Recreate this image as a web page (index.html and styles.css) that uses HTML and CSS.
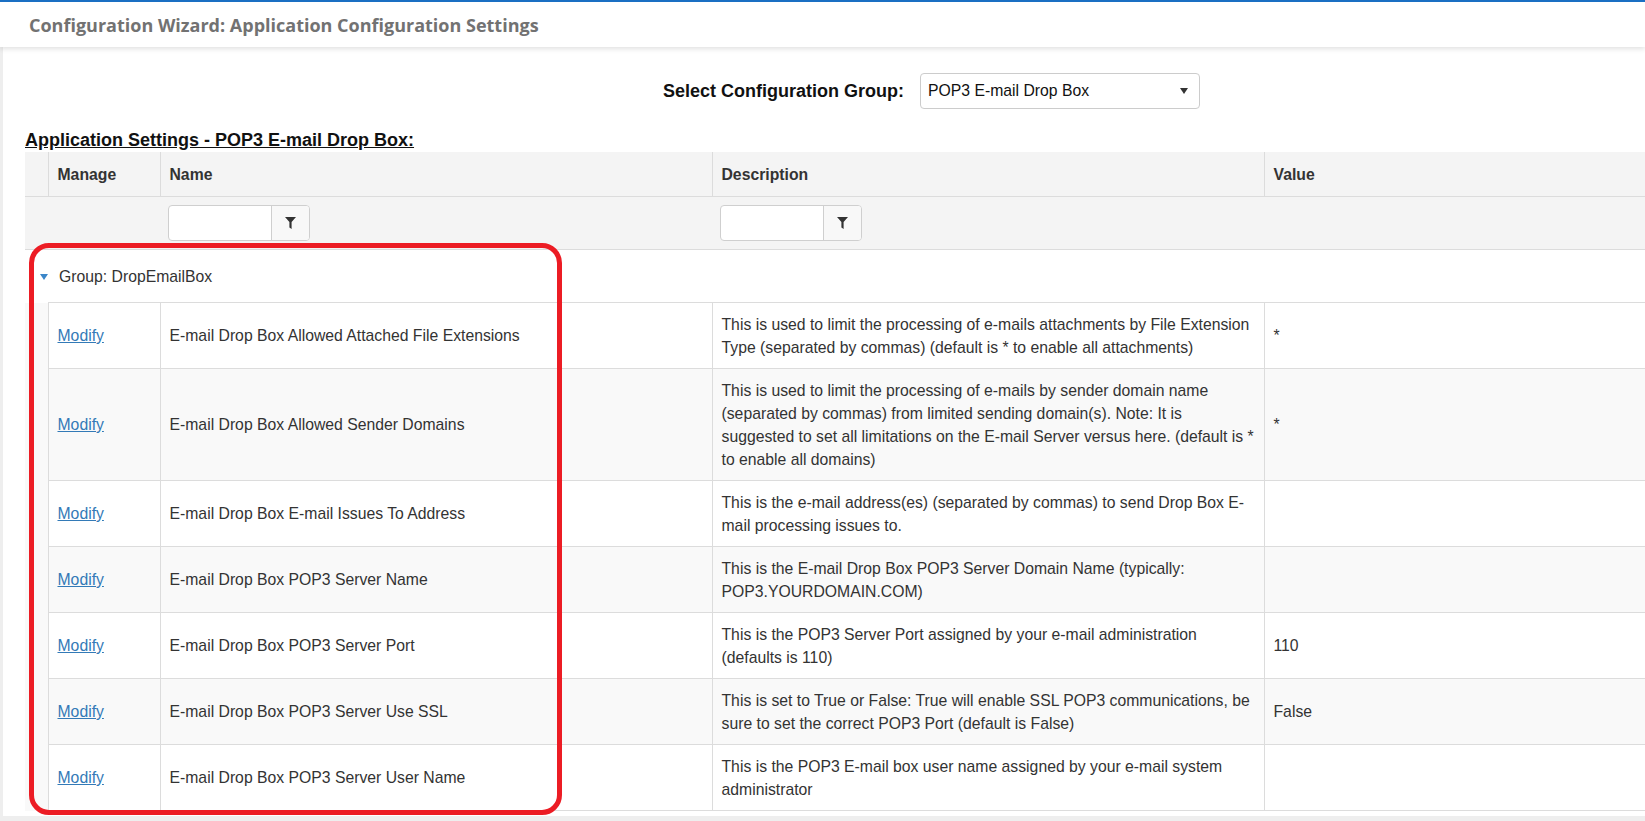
FILE: index.html
```html
<!DOCTYPE html>
<html lang="en">
<head>
<meta charset="utf-8">
<title>Configuration Wizard</title>
<link rel="stylesheet" href="styles.css">
</head>
<body>
<header class="topbar">
  <h1 class="page-title">Configuration Wizard: Application Configuration Settings</h1>
</header>
<main class="panel">
  <div class="group-select">
    <label class="group-label">Select Configuration Group:</label>
    <div class="select">
      <span>POP3 E-mail Drop Box</span>
      <svg class="select-arrow" width="8" height="6" viewBox="0 0 8 6"><path d="M0 0H8L4 6Z" fill="#333"/></svg>
    </div>
  </div>
  <h2 class="section-title">Application Settings - POP3 E-mail Drop Box:</h2>
  <div class="grid-wrap">
    <table class="grid">
      <colgroup>
        <col class="c-ind"><col class="c-manage"><col class="c-name"><col class="c-desc"><col class="c-value">
      </colgroup>
      <thead>
        <tr class="head-row"><th></th><th>Manage</th><th>Name</th><th>Description</th><th>Value</th></tr>
        <tr class="filter-row">
          <td></td><td></td>
          <td><div class="filter"><span class="filter-input"></span><span class="filter-btn"><svg width="11" height="12" viewBox="0 0 11 12"><path d="M0 0H11L6.6 5V12L4.4 10.6V5Z" fill="#333"/></svg></span></div></td>
          <td><div class="filter"><span class="filter-input"></span><span class="filter-btn"><svg width="11" height="12" viewBox="0 0 11 12"><path d="M0 0H11L6.6 5V12L4.4 10.6V5Z" fill="#333"/></svg></span></div></td>
          <td></td>
        </tr>
      </thead>
      <tbody>
        <tr class="group-row"><td colspan="5"><svg class="group-caret" width="8" height="6" viewBox="0 0 8 6"><path d="M0 0H8L4 6Z" fill="#3b86c9"/></svg><span>Group: DropEmailBox</span></td></tr>
        <tr class="data-row">
          <td class="ind"></td><td><a href="#" class="link">Modify</a></td>
          <td>E-mail Drop Box Allowed Attached File Extensions</td>
          <td>This is used to limit the processing of e-mails attachments by File Extension Type (separated by commas) (default is * to enable all attachments)</td>
          <td>*</td>
        </tr>
        <tr class="data-row alt">
          <td class="ind"></td><td><a href="#" class="link">Modify</a></td>
          <td>E-mail Drop Box Allowed Sender Domains</td>
          <td>This is used to limit the processing of e-mails by sender domain name (separated by commas) from limited sending domain(s). Note: It is suggested to set all limitations on the E-mail Server versus here. (default is * to enable all domains)</td>
          <td>*</td>
        </tr>
        <tr class="data-row">
          <td class="ind"></td><td><a href="#" class="link">Modify</a></td>
          <td>E-mail Drop Box E-mail Issues To Address</td>
          <td>This is the e-mail address(es) (separated by commas) to send Drop Box E-mail processing issues to.</td>
          <td></td>
        </tr>
        <tr class="data-row alt">
          <td class="ind"></td><td><a href="#" class="link">Modify</a></td>
          <td>E-mail Drop Box POP3 Server Name</td>
          <td>This is the E-mail Drop Box POP3 Server Domain Name (typically: POP3.YOURDOMAIN.COM)</td>
          <td></td>
        </tr>
        <tr class="data-row">
          <td class="ind"></td><td><a href="#" class="link">Modify</a></td>
          <td>E-mail Drop Box POP3 Server Port</td>
          <td>This is the POP3 Server Port assigned by your e-mail administration (defaults is 110)</td>
          <td>110</td>
        </tr>
        <tr class="data-row alt">
          <td class="ind"></td><td><a href="#" class="link">Modify</a></td>
          <td>E-mail Drop Box POP3 Server Use SSL</td>
          <td>This is set to True or False: True will enable SSL POP3 communications, be sure to set the correct POP3 Port (default is False)</td>
          <td>False</td>
        </tr>
        <tr class="data-row">
          <td class="ind"></td><td><a href="#" class="link">Modify</a></td>
          <td>E-mail Drop Box POP3 Server User Name</td>
          <td>This is the POP3 E-mail box user name assigned by your e-mail system administrator</td>
          <td></td>
        </tr>
      </tbody>
    </table>
  </div>
</main>
<div class="highlight"></div>
</body>
</html>
```

FILE: styles.css
```css
html, body {
  margin: 0;
  padding: 0;
}
body {
  background: #eeeeee;
  font-family: "Liberation Sans", Arial, sans-serif;
  color: #333;
  width: 1645px;
  height: 821px;
  overflow: hidden;
  position: relative;
}

.topbar {
  border-top: 2px solid #1a6fc3;
  background: #fff;
  height: 45px;
  display: flex;
  align-items: center;
  padding-left: 29px;
  box-shadow: 0 2px 5px rgba(0, 0, 0, 0.12);
  position: relative;
  z-index: 1;
}
.page-title {
  margin: 0;
  font-family: "Open Sans", sans-serif;
  font-weight: 700;
  font-size: 18px;
  color: #727272;
}

.panel {
  background: #fff;
  margin-left: 3px;
  padding: 0 0 5px 22px;
}

.group-select {
  display: flex;
  align-items: center;
  gap: 16px;
  padding: 26px 0 0 638px;
}
.group-label {
  font-weight: bold;
  font-size: 18px;
  color: #111;
}
.select {
  width: 280px;
  height: 36px;
  box-sizing: border-box;
  border: 1px solid #ccc;
  border-radius: 4px;
  display: flex;
  align-items: center;
  justify-content: space-between;
  padding: 0 11px 0 7px;
  font-size: 15.75px;
  color: #111;
  background: #fff;
}

.section-title {
  margin: 21px 0 1px;
  font-size: 18px;
  line-height: 21px;
  font-weight: bold;
  text-decoration: underline;
  color: #111;
}

.grid-wrap {
  overflow: hidden;
}
.grid {
  border-collapse: collapse;
  table-layout: fixed;
  width: 1700px;
  font-size: 15.75px;
  line-height: 23px;
}
.c-ind { width: 23px; }
.c-manage { width: 112px; }
.c-name { width: 552px; }
.c-desc { width: 552px; }

.head-row th {
  background: #f4f4f4;
  height: 44px;
  padding: 0 9px;
  text-align: left;
  font-weight: bold;
  color: #333;
  border-left: 1px solid #dcdcdc;
  border-bottom: 1px solid #dcdcdc;
}
.head-row th:first-child {
  border-left: none;
}

.filter-row td {
  background: #f4f4f4;
  height: 52px;
  padding: 0 8px;
  border-bottom: 1px solid #dcdcdc;
}
.filter {
  display: flex;
  width: 142px;
  height: 36px;
  box-sizing: border-box;
  border: 1px solid #cfcfcf;
  border-radius: 4px;
  background: #fff;
  overflow: hidden;
}
.filter-input {
  flex: 1;
}
.filter-btn {
  width: 37px;
  border-left: 1px solid #cfcfcf;
  background: #f8f8f8;
  display: flex;
  align-items: center;
  justify-content: center;
}

.group-row td {
  height: 52px;
  padding: 0 0 0 15px;
  background: #fff;
}
.group-row td span {
  margin-left: 11px;
}
.group-caret {
  vertical-align: middle;
}

.data-row td {
  padding: 9.5px 6px 9.5px 9px;
  border: 1px solid #dcdcdc;
  vertical-align: middle;
  background: #fff;
}
.data-row.alt td {
  background: #f9f9f9;
}
.data-row td.ind {
  border: none;
  background: #f9f9f9;
}

.link {
  color: #337ab7;
  text-decoration: underline;
}

.highlight {
  position: absolute;
  left: 29px;
  top: 243px;
  width: 533px;
  height: 572px;
  box-sizing: border-box;
  border: 5px solid #ec1c24;
  border-radius: 20px;
  pointer-events: none;
}
```
